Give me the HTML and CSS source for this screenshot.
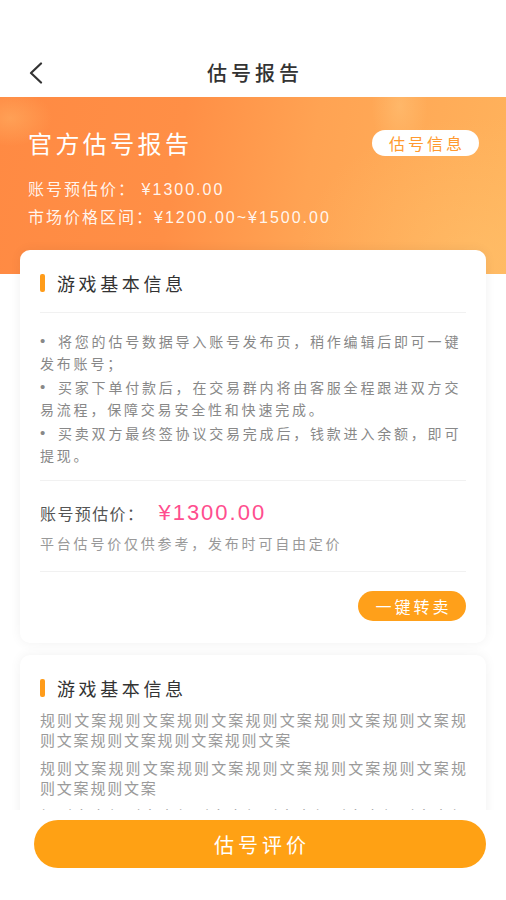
FILE: index.html
```html
<!DOCTYPE html>
<html lang="zh-CN">
<head>
<meta charset="utf-8">
<title>估号报告</title>
<link rel="stylesheet" href="styles.css">
</head>
<body>
<div class="page">
  <header class="nav">
    <span class="nav-back">
      <svg width="14" height="22" viewBox="0 0 14 22"><polyline points="12,1.5 2,11 12,20.5" fill="none" stroke="#333" stroke-width="2.2" stroke-linecap="round" stroke-linejoin="round"/></svg>
    </span>
    <h1 class="nav-title">估号报告</h1>
    <span class="nav-side"></span>
  </header>

  <main class="scroll">
    <section class="banner">
      <div class="banner-top">
        <h2 class="banner-title">官方估号报告</h2>
        <span class="pill">估号信息</span>
      </div>
      <p class="banner-line">账号预估价： <span class="num">¥1300.00</span></p>
      <p class="banner-line">市场价格区间：<span class="num">¥1200.00~¥1500.00</span></p>
    </section>

    <div class="cards">
      <section class="card">
        <div class="card-title card-title-line"><span class="bar"></span>游戏基本信息</div>
        <div class="bullets">
          <p class="bullet">将您的估号数据导入账号发布页，稍作编辑后即可一键发布账号；</p>
          <p class="bullet">买家下单付款后，在交易群内将由客服全程跟进双方交易流程，保障交易安全性和快速完成。</p>
          <p class="bullet">买卖双方最终签协议交易完成后，钱款进入余额，即可提现。</p>
        </div>
        <div class="price">
          <div class="price-row"><span class="price-label">账号预估价：</span><span class="price-value num">¥1300.00</span></div>
          <p class="price-note">平台估号价仅供参考，发布时可自由定价</p>
        </div>
        <div class="actions">
          <button class="resell">一键转卖</button>
        </div>
      </section>

      <section class="card">
        <div class="card-title"><span class="bar"></span>游戏基本信息</div>
        <div class="rules">
          <p class="rule"><span class="full">规则文案规则文案规则文案规则文案规则文案规则文案规</span><span>则文案规则文案规则文案规则文案</span></p>
          <p class="rule"><span class="full">规则文案规则文案规则文案规则文案规则文案规则文案规</span><span>则文案规则文案</span></p>
          <p class="rule"><span class="full">规则文案规则文案规则文案规则文案规则文案规则文案规</span><span>则文案规则文案</span></p>
        </div>
      </section>
    </div>
  </main>

  <footer class="bottom">
    <button class="evaluate">估号评价</button>
  </footer>
</div>
</body>
</html>
```

FILE: styles.css
```css
* { box-sizing: border-box; }
html, body { margin: 0; padding: 0; background: #fff; }
body {
  font-family: "Noto Sans CJK SC", "Noto Sans", sans-serif;
  color: #333;
}
p, h1, h2 { margin: 0; font-weight: normal; }
button { font-family: inherit; border: 0; cursor: pointer; }

.num { font-family: "Liberation Sans", "Noto Sans CJK SC", sans-serif; }

.page {
  width: 506px;
  height: 900px;
  display: flex;
  flex-direction: column;
  overflow: hidden;
}

/* nav */
.nav {
  height: 97px;
  flex: none;
  padding: 61px 0 12px;
  display: grid;
  grid-template-columns: 1fr auto 1fr;
  align-items: center;
  background: #fff;
}
.nav-back { padding-left: 29px; display: flex; align-items: center; height: 24px; }
.nav-title {
  font-size: 20px;
  line-height: 24px;
  letter-spacing: 4px;
  margin-right: -4px;
  color: #333;
  font-weight: 500;
}

/* scroll region */
.scroll {
  height: 713px;
  flex: none;
  overflow: hidden;
}

.banner {
  height: 177px;
  padding: 30px 28px 0;
  color: #fff;
  background:
    radial-gradient(ellipse 60px 40px at 2% 12%, rgba(255,200,120,0.35), transparent 70%),
    radial-gradient(ellipse 40px 70px at 79% 5%, rgba(255,210,140,0.35), transparent 70%),
    radial-gradient(ellipse 260px 200px at 95% 90%, rgba(255,205,120,0.35), transparent 70%),
    linear-gradient(100deg, #FF8A43 0%, #FF8F46 35%, #FFA353 60%, #FFB35C 100%);
}
.banner-top {
  display: flex;
  justify-content: space-between;
  align-items: center;
  height: 32px;
}
.banner-title {
  font-size: 24px;
  line-height: 32px;
  letter-spacing: 3.4px;
  font-weight: 400;
}
.pill {
  width: 107px;
  height: 26px;
  margin-right: -1px;
  border-radius: 13px;
  background: #fff;
  color: #FF9A30;
  font-size: 16px;
  line-height: 26px;
  letter-spacing: 3px;
  text-indent: 3px;
  text-align: center;
}
.banner-line {
  font-size: 16px;
  line-height: 26px;
  letter-spacing: 2px;
  color: rgba(255,255,255,0.92);
}
.banner-top + .banner-line { margin-top: 16px; }

/* cards */
.cards {
  margin-top: -24px;
  padding: 0 20px;
  display: flex;
  flex-direction: column;
  gap: 12px;
}
.card {
  background: #fff;
  border-radius: 10px;
  box-shadow: 0 0 12px rgba(0,0,0,0.06);
  padding: 0 20px;
}
.card-title {
  display: flex;
  align-items: center;
  padding: 21px 0 17px;
  font-size: 18px;
  line-height: 24px;
  letter-spacing: 3.6px;
  color: #333;
}
.card-title-line { border-bottom: 1px solid #F1F1F1; }
.bar {
  width: 5px;
  height: 18px;
  border-radius: 2px;
  background: #FF9C1A;
  margin-right: 12px;
}

.bullets {
  padding: 17px 0 14px;
  border-bottom: 1px solid #F1F1F1;
}
.bullet {
  font-size: 14px;
  line-height: 22px;
  letter-spacing: 2.8px;
  color: #888;
}
.bullet + .bullet { margin-top: 2px; }
.bullet::before {
  content: "•";
  display: inline-block;
  width: 18px;
  height: 22px;
  line-height: 22px;
  vertical-align: top;
  letter-spacing: 0;
  font-family: "Liberation Sans", sans-serif;
  font-size: 15px;
  color: #888;
}

.price {
  padding: 17px 0 17px;
  border-bottom: 1px solid #F1F1F1;
}
.price-row { display: flex; align-items: center; height: 30px; }
.price-label {
  font-size: 16px;
  letter-spacing: 1.4px;
  color: #555;
}
.price-value {
  margin-left: 14px;
  font-size: 22px;
  letter-spacing: 2px;
  color: #FF4D8E;
}
.price-note {
  margin-top: 4px;
  font-size: 14px;
  line-height: 22px;
  letter-spacing: 2.8px;
  color: #999;
}

.actions {
  display: flex;
  justify-content: flex-end;
  padding: 19px 0 22px;
}
.resell {
  width: 108px;
  height: 30px;
  border-radius: 15px;
  background: #FFA01A;
  color: #fff;
  font-size: 16px;
  letter-spacing: 3px;
  text-indent: 3px;
}

.rules { margin-top: -7px; padding-bottom: 20px; }
.rule {
  font-size: 15px;
  line-height: 20px;
  letter-spacing: 1.8px;
  color: #9a9a9a;
}
.rule span { display: block; }
.rule .full { text-align: justify; text-align-last: justify; margin-right: -1.8px; }
.rule + .rule { margin-top: 8px; }

/* bottom */
.bottom {
  flex: none;
  height: 90px;
  padding: 10px 20px 0 34px;
  background: #fff;
}
.evaluate {
  width: 100%;
  height: 48px;
  border-radius: 24px;
  background: #FFA114;
  color: #fff;
  font-size: 20px;
  letter-spacing: 4px;
  text-indent: 4px;
}
```
